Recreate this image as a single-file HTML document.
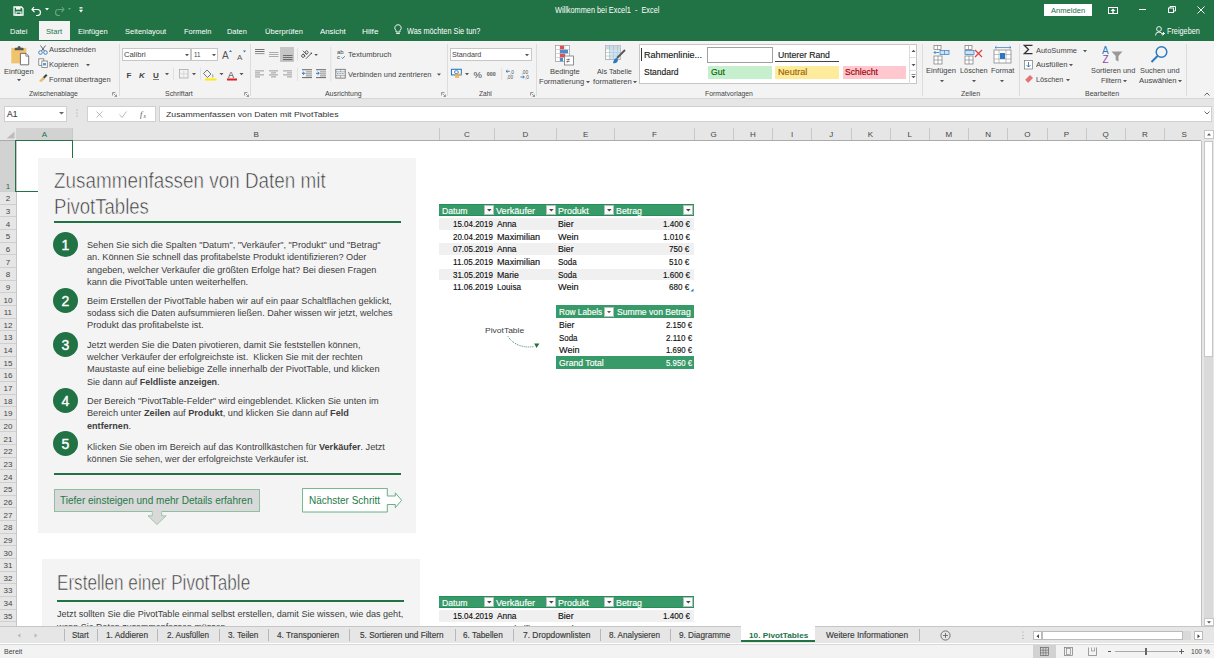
<!DOCTYPE html>
<html><head><meta charset="utf-8"><title>Excel</title>
<style>
html,body{margin:0;padding:0;}
body{width:1214px;height:658px;position:relative;overflow:hidden;background:#fff;font-family:"Liberation Sans", sans-serif;}
.r{position:absolute;}
.t{position:absolute;white-space:nowrap;line-height:1;transform-origin:0 0;}
.t b{font-weight:bold;}
.ch{position:absolute;top:131.28px;font-size:8px;line-height:1;text-align:center;}
.rh{position:absolute;left:0;width:15.8px;font-size:8px;line-height:1;text-align:center;}
.circ{position:absolute;width:25px;height:25px;border-radius:50%;background:#217346;color:#fff;font-size:14px;line-height:26.2px;text-align:center;-webkit-text-stroke:0.4px #fff;}
</style></head><body>
<div class="r" style="left:0.00px;top:0.00px;width:1214.00px;height:40.50px;background:#217346;;"></div>
<div class="r" style="left:38.50px;top:21.30px;width:31.20px;height:19.20px;background:#f3f3f3;;"></div>
<svg class="r" style="left:13.00px;top:6.00px;" width="11" height="10" viewBox="0 0 11 10"><path d="M1 1h7.5l1.5 1.5v6.5h-9z" fill="none" stroke="#fff" stroke-width="1.3"/><rect x="3" y="1" width="4.5" height="2.6" fill="#fff"/><rect x="3" y="6" width="5" height="3" fill="none" stroke="#fff" stroke-width="1"/></svg>
<svg class="r" style="left:31.00px;top:5.00px;" width="12" height="11" viewBox="0 0 12 11"><path d="M3 2L1 4.5 3.5 7" fill="none" stroke="#fff" stroke-width="1.2"/><path d="M1.5 4.5h5a3 3 0 0 1 0 6H5" fill="none" stroke="#fff" stroke-width="1.2"/></svg>
<svg class="r" style="left:45.00px;top:8.00px;" width="4" height="3" viewBox="0 0 4 3"><path d="M0 0h4L2 2.5z" fill="#fff"/></svg>
<svg class="r" style="left:54.00px;top:5.00px;" width="11" height="11" viewBox="0 0 11 11"><path d="M8 2l2 2.5L7.5 7" fill="none" stroke="#6aa383" stroke-width="1.1"/><path d="M9.5 4.5h-5a3 3 0 0 0 0 6H6" fill="none" stroke="#6aa383" stroke-width="1.1"/></svg>
<svg class="r" style="left:67.50px;top:8.00px;" width="3" height="3" viewBox="0 0 3 3"><path d="M0 0h3L1.5 2z" fill="#6aa383"/></svg>
<svg class="r" style="left:78.50px;top:7.00px;" width="4" height="6" viewBox="0 0 4 6"><rect x="0.5" y="0" width="3" height="0.8" fill="#fff"/><rect x="0.5" y="1.5" width="3" height="0.8" fill="#fff"/><path d="M0 3h4L2 5.5z" fill="#fff"/></svg>
<div class="r" style="left:1044.30px;top:3.50px;width:48.10px;height:12.20px;background:#fff;;"></div>
<svg class="r" style="left:1108.00px;top:6.50px;" width="10" height="7" viewBox="0 0 10 7"><rect x="0.5" y="0.5" width="9" height="6" fill="none" stroke="#fff" stroke-width="1"/><path d="M5 1.5L7.5 4h-5z" fill="#fff"/><rect x="4.3" y="3.5" width="1.4" height="2.5" fill="#fff"/></svg>
<div class="r" style="left:1139.00px;top:9.40px;width:7.00px;height:1.00px;background:#fff;;"></div>
<svg class="r" style="left:1167.50px;top:6.30px;" width="8" height="7" viewBox="0 0 8 7"><rect x="0.5" y="2" width="5" height="4.5" fill="none" stroke="#fff" stroke-width="1"/><path d="M2 2V0.5h5.5V5H6" fill="none" stroke="#fff" stroke-width="1"/></svg>
<svg class="r" style="left:1197.00px;top:6.00px;" width="8" height="8" viewBox="0 0 8 8"><path d="M0.5 0.5L7.5 7.5M7.5 0.5L0.5 7.5" stroke="#fff" stroke-width="1"/></svg>
<svg class="r" style="left:394.00px;top:24.00px;" width="8" height="11" viewBox="0 0 8 11"><path d="M4 0.7a3.2 3.2 0 0 0-2 5.7V8h4V6.4A3.2 3.2 0 0 0 4 0.7z" fill="none" stroke="#fff" stroke-width="0.9"/><rect x="2.2" y="9" width="3.6" height="0.9" fill="#fff"/></svg>
<svg class="r" style="left:1155.00px;top:26.00px;" width="10" height="10" viewBox="0 0 10 10"><circle cx="4" cy="3" r="2.4" fill="none" stroke="#fff" stroke-width="0.9"/><path d="M0.5 9.5a3.5 3.5 0 0 1 7 0" fill="none" stroke="#fff" stroke-width="0.9"/><path d="M7 7.5h3M8.5 6v3" stroke="#fff" stroke-width="0.9"/></svg>
<div class="r" style="left:0.00px;top:40.50px;width:1214.00px;height:58.00px;background:#f3f3f3;;"></div>
<div class="r" style="left:0.00px;top:98.00px;width:1214.00px;height:0.80px;background:#d6d6d6;;"></div>
<div class="r" style="left:118.60px;top:43.50px;width:0.80px;height:52.00px;background:#dcdcdc;;"></div>
<div class="r" style="left:249.70px;top:43.50px;width:0.80px;height:52.00px;background:#dcdcdc;;"></div>
<div class="r" style="left:446.80px;top:43.50px;width:0.80px;height:52.00px;background:#dcdcdc;;"></div>
<div class="r" style="left:535.90px;top:43.50px;width:0.80px;height:52.00px;background:#dcdcdc;;"></div>
<div class="r" style="left:922.40px;top:43.50px;width:0.80px;height:52.00px;background:#dcdcdc;;"></div>
<div class="r" style="left:1018.50px;top:43.50px;width:0.80px;height:52.00px;background:#dcdcdc;;"></div>
<div class="r" style="left:1185.80px;top:43.50px;width:0.80px;height:52.00px;background:#dcdcdc;;"></div>
<svg class="r" style="left:112.00px;top:91.50px;" width="5" height="5" viewBox="0 0 5 5"><path d="M0.5 0.5h3M0.5 0.5v3M1.5 1.5l3 3M2.5 4.5h2v-2" fill="none" stroke="#777" stroke-width="0.7"/></svg>
<svg class="r" style="left:243.50px;top:91.50px;" width="5" height="5" viewBox="0 0 5 5"><path d="M0.5 0.5h3M0.5 0.5v3M1.5 1.5l3 3M2.5 4.5h2v-2" fill="none" stroke="#777" stroke-width="0.7"/></svg>
<svg class="r" style="left:440.50px;top:91.50px;" width="5" height="5" viewBox="0 0 5 5"><path d="M0.5 0.5h3M0.5 0.5v3M1.5 1.5l3 3M2.5 4.5h2v-2" fill="none" stroke="#777" stroke-width="0.7"/></svg>
<svg class="r" style="left:529.50px;top:91.50px;" width="5" height="5" viewBox="0 0 5 5"><path d="M0.5 0.5h3M0.5 0.5v3M1.5 1.5l3 3M2.5 4.5h2v-2" fill="none" stroke="#777" stroke-width="0.7"/></svg>
<svg class="r" style="left:10.00px;top:44.50px;" width="21" height="21" viewBox="0 0 21 21"><rect x="1.3" y="2.9" width="15" height="15.5" fill="#f0c36d"/><path d="M4.7 5.3v-1.6q0-1 1-1h1.8a1.6 1.6 0 0 1 3.2 0h1.9q1 0 1 1v1.6z" fill="#555"/><path d="M10.4 8.4h5.6l2.7 2.7v8.7h-8.3z" fill="#fff" stroke="#666" stroke-width="0.9"/><path d="M15.9 8.4v2.8h2.8" fill="none" stroke="#666" stroke-width="0.7"/></svg>
<svg class="r" style="left:16.50px;top:79.00px;" width="4" height="3" viewBox="0 0 4 3"><path d="M0 0h4L2 2.2z" fill="#555"/></svg>
<svg class="r" style="left:37.50px;top:44.50px;" width="10" height="10" viewBox="0 0 10 10"><circle cx="2.5" cy="7.5" r="1.8" fill="none" stroke="#2b79c2" stroke-width="0.9"/><circle cx="7.5" cy="7.5" r="1.8" fill="none" stroke="#2b79c2" stroke-width="0.9"/><path d="M3.5 6L7.5 0.5M6.5 6L2.5 0.5" stroke="#555" stroke-width="0.9"/></svg>
<svg class="r" style="left:37.50px;top:58.00px;" width="10" height="10" viewBox="0 0 10 10"><rect x="0.8" y="0.8" width="5" height="6.5" fill="#fff" stroke="#777" stroke-width="0.8"/><rect x="3.8" y="3" width="5.5" height="6.5" fill="#fff" stroke="#777" stroke-width="0.8"/><rect x="5" y="5" width="3" height="2.5" fill="#5b9bd5"/></svg>
<svg class="r" style="left:85.50px;top:64.00px;" width="4" height="3" viewBox="0 0 4 3"><path d="M0 0h4L2 2.2z" fill="#555"/></svg>
<svg class="r" style="left:37.50px;top:73.00px;" width="10" height="9" viewBox="0 0 10 9"><path d="M1 8l4-4 2 2-4 3z" fill="#e8b968"/><path d="M5 4l3-3 1.5 1.5-3 3z" fill="#444"/></svg>
<div class="r" style="left:121.60px;top:47.50px;width:69.80px;height:13.80px;background:#fff;border:0.8px solid #c6c6c6;box-sizing:border-box;"></div>
<div class="r" style="left:191.40px;top:47.50px;width:27.10px;height:13.80px;background:#fff;border:0.8px solid #c6c6c6;box-sizing:border-box;"></div>
<svg class="r" style="left:184.50px;top:53.50px;" width="4" height="3" viewBox="0 0 4 3"><path d="M0 0h4L2 2.2z" fill="#555"/></svg>
<svg class="r" style="left:212.00px;top:53.50px;" width="4" height="3" viewBox="0 0 4 3"><path d="M0 0h4L2 2.2z" fill="#555"/></svg>
<svg class="r" style="left:222.00px;top:49.00px;" width="10" height="11" viewBox="0 0 10 11"><text x="0" y="10" font-family="Liberation Sans" font-size="10" fill="#555">A</text><path d="M7 3l1.5-2L10 3z" fill="#2b79c2"/></svg>
<svg class="r" style="left:236.50px;top:50.00px;" width="9" height="10" viewBox="0 0 9 10"><text x="0" y="9.5" font-family="Liberation Sans" font-size="8" fill="#555">A</text><path d="M6 0.5h3L7.5 2.5z" fill="#2b79c2"/></svg>
<svg class="r" style="left:125.00px;top:68.00px;" width="120" height="14" viewBox="0 0 120 14"><text x="1.5" y="9.8" font-family="Liberation Sans" font-weight="bold" font-size="8" fill="#444">F</text><text x="14" y="9.8" font-family="Liberation Sans" font-weight="bold" font-style="italic" font-size="8" fill="#444">K</text><text x="28" y="9.5" font-family="Liberation Sans" font-weight="bold" font-size="8" fill="#444">U</text><rect x="28" y="11" width="6" height="0.7" fill="#444"/><path d="M40 5h4l-2 2.2z" fill="#555"/><rect x="48.2" y="0" width="0.8" height="12" fill="#dcdcdc"/><rect x="54.5" y="1.5" width="8.5" height="8.5" fill="none" stroke="#aaa" stroke-width="0.8"/><path d="M58.75 1.5v8.5M54.5 5.75h8.5" stroke="#ccc" stroke-width="0.6"/><path d="M67 5h4l-2 2.2z" fill="#555"/><rect x="75.2" y="0" width="0.8" height="12" fill="#dcdcdc"/><path d="M82 2l4 4-3.5 3.5-4-4z" fill="none" stroke="#555" stroke-width="0.8"/><path d="M87.5 6.5q1 2 0 3" fill="none" stroke="#555" stroke-width="0.6"/><rect x="80" y="10.5" width="11.5" height="2" fill="#ffea00"/><path d="M94.5 5h4l-2 2.2z" fill="#555"/><text x="103" y="9.5" font-family="Liberation Sans" font-size="9" fill="#444">A</text><rect x="102" y="10.5" width="10" height="2" fill="#e02020"/><path d="M114.5 5h4l-2 2.2z" fill="#555"/></svg>
<div class="r" style="left:280.30px;top:47.30px;width:13.80px;height:14.50px;background:#c6c6c6;;"></div>
<svg class="r" style="left:250.00px;top:42.00px;" width="200" height="40" viewBox="0 0 200 40"><rect x="5" y="7" width="9.5" height="0.8" fill="#555"/><rect x="5" y="9" width="9.5" height="0.8" fill="#555"/><rect x="5" y="11.2" width="9.5" height="0.9" fill="#888"/><rect x="19" y="10" width="9.5" height="0.8" fill="#999"/><rect x="19" y="12" width="9.5" height="0.8" fill="#999"/><rect x="19" y="14" width="9.5" height="0.8" fill="#999"/><rect x="33" y="13" width="9.5" height="0.8" fill="#555"/><rect x="33" y="15" width="9.5" height="0.8" fill="#555"/><rect x="33" y="17.2" width="9.5" height="0.9" fill="#555"/><rect x="47.2" y="6" width="0.8" height="13" fill="#dcdcdc"/><rect x="47.2" y="26" width="0.8" height="13" fill="#dcdcdc"/><g transform="rotate(-45 55 12)"><circle cx="52.3" cy="12" r="1.5" fill="none" stroke="#444" stroke-width="0.8"/><path d="M53.8 10.3v3.5" stroke="#444" stroke-width="0.8"/><circle cx="57.3" cy="12" r="1.5" fill="none" stroke="#444" stroke-width="0.8"/><path d="M55.8 8.2v5.6" stroke="#444" stroke-width="0.8"/></g><path d="M56 16.7L61.3 11.3" stroke="#444" stroke-width="0.9"/><circle cx="61.3" cy="11.3" r="0.8" fill="#444"/><path d="M64.3 12h3.6l-1.8 2z" fill="#555"/><rect x="5" y="28.5" width="9" height="0.8" fill="#888"/><rect x="5" y="30.5" width="5" height="0.8" fill="#888"/><rect x="5" y="32.5" width="9" height="0.8" fill="#888"/><rect x="5" y="34.5" width="5" height="0.8" fill="#888"/><rect x="19" y="28.5" width="9" height="0.8" fill="#888"/><rect x="21" y="30.5" width="5" height="0.8" fill="#888"/><rect x="19" y="32.5" width="9" height="0.8" fill="#888"/><rect x="21" y="34.5" width="5" height="0.8" fill="#888"/><rect x="33" y="28.5" width="9" height="0.8" fill="#888"/><rect x="37" y="30.5" width="5" height="0.8" fill="#888"/><rect x="33" y="32.5" width="9" height="0.8" fill="#888"/><rect x="37" y="34.5" width="5" height="0.8" fill="#888"/><rect x="52" y="27.3" width="10" height="0.9" fill="#555"/><rect x="56" y="29.5" width="6" height="0.8" fill="#777"/><rect x="56" y="31.5" width="6" height="0.8" fill="#777"/><rect x="56" y="33.5" width="6" height="0.8" fill="#777"/><rect x="52" y="35.2" width="10" height="0.9" fill="#555"/><path d="M52.3 31.3h3.2M52.3 31.3l1.6-1.5M52.3 31.3l1.6 1.5" stroke="#2b79c2" stroke-width="1" fill="none"/><rect x="66" y="27.3" width="10" height="0.9" fill="#555"/><rect x="70" y="29.5" width="6" height="0.8" fill="#777"/><rect x="70" y="31.5" width="6" height="0.8" fill="#777"/><rect x="70" y="33.5" width="6" height="0.8" fill="#777"/><rect x="66" y="35.2" width="10" height="0.9" fill="#555"/><path d="M66 31.3h3.2M69.2 31.3l-1.6-1.5M69.2 31.3l-1.6 1.5" stroke="#2b79c2" stroke-width="1" fill="none"/><rect x="80.4" y="5" width="0.8" height="34" fill="#dcdcdc"/><text x="87" y="12" font-family="Liberation Sans" font-size="6" fill="#444">ab</text><text x="87" y="17" font-family="Liberation Sans" font-size="6" fill="#444">c</text><path d="M91.5 15.5l1.2 1 2-2.2" stroke="#2b79c2" stroke-width="0.9" fill="none"/><rect x="85.8" y="27.3" width="9.4" height="8.8" fill="none" stroke="#666" stroke-width="0.8"/><path d="M85.8 29.8h9.4M85.8 33.6h9.4M90.5 27.3v2.5M90.5 33.6v2.5" stroke="#888" stroke-width="0.6"/><path d="M87 31.7h7" stroke="#2b79c2" stroke-width="0.8" stroke-dasharray="1 0.6"/><path d="M187 31.5h4l-2 2.2z" fill="#555"/></svg>
<div class="r" style="left:449.50px;top:47.50px;width:82.50px;height:13.80px;background:#fff;border:0.8px solid #c6c6c6;box-sizing:border-box;"></div>
<svg class="r" style="left:525.00px;top:53.50px;" width="4" height="3" viewBox="0 0 4 3"><path d="M0 0h4L2 2.2z" fill="#555"/></svg>
<svg class="r" style="left:450.00px;top:68.00px;" width="85" height="14" viewBox="0 0 85 14"><rect x="1.5" y="1.3" width="9.8" height="5.6" fill="#fff" stroke="#2b79c2" stroke-width="1.1"/><ellipse cx="6.4" cy="4.1" rx="2" ry="1.5" fill="none" stroke="#2b79c2" stroke-width="0.9"/><rect x="5" y="6.2" width="4" height="1.6" fill="#f0b050"/><rect x="5" y="8.2" width="4" height="1.6" fill="#f0b050"/><rect x="7.8" y="5.5" width="3.5" height="1.5" fill="#f0b050"/><path d="M15 5h4l-2 2.2z" fill="#555"/><text x="23.6" y="9.6" font-family="Liberation Sans" font-size="9.5" fill="#444">%</text><text x="36.8" y="7.7" font-family="Liberation Sans" font-weight="bold" font-size="5.3" fill="#555">000</text><rect x="51.3" y="0" width="0.8" height="12" fill="#dcdcdc"/><text x="60" y="5.5" font-family="Liberation Sans" font-size="4.8" fill="#555">,0</text><text x="56.5" y="10.5" font-family="Liberation Sans" font-size="4.8" fill="#555">,00</text><path d="M56 3.3h3.8M56 3.3l1.5-1.3M56 3.3l1.5 1.3" stroke="#2b79c2" stroke-width="0.9" fill="none"/><text x="71.5" y="5.5" font-family="Liberation Sans" font-size="4.8" fill="#555">,00</text><text x="75" y="10.5" font-family="Liberation Sans" font-size="4.8" fill="#555">,0</text><path d="M70.5 9h3.8M74.3 9l-1.5-1.3M74.3 9l-1.5 1.3" stroke="#2b79c2" stroke-width="0.9" fill="none"/></svg>
<svg class="r" style="left:555.00px;top:44.50px;" width="20" height="21" viewBox="0 0 20 21"><rect x="0.5" y="0.5" width="14" height="16" fill="#fff" stroke="#999" stroke-width="0.7"/><path d="M0.5 4.5h14M0.5 8.5h14M0.5 12.5h14M5 0.5v16M10 0.5v16" stroke="#bbb" stroke-width="0.6"/><rect x="5" y="0.8" width="4" height="3.5" fill="#e05050"/><rect x="5" y="4.8" width="8" height="3.5" fill="#4a8bd0"/><rect x="5" y="8.8" width="5" height="3.5" fill="#e05050"/><rect x="5" y="12.8" width="3" height="3.5" fill="#4a8bd0"/><rect x="9.5" y="11" width="9" height="9" fill="#fff" stroke="#777" stroke-width="0.8"/><text x="11.3" y="18" font-family="Liberation Sans" font-size="7" fill="#333">≠</text></svg>
<svg class="r" style="left:586.00px;top:80.50px;" width="4" height="3" viewBox="0 0 4 3"><path d="M0 0h4L2 2.2z" fill="#555"/></svg>
<svg class="r" style="left:605.00px;top:44.50px;" width="21" height="21" viewBox="0 0 21 21"><rect x="0.5" y="0.5" width="15" height="14" fill="#fff" stroke="#999" stroke-width="0.7"/><rect x="0.5" y="0.5" width="15" height="3" fill="#cfd8e8"/><path d="M0.5 4h15M0.5 7.5h15M0.5 11h15M4.5 0.5v14M8.5 0.5v14M12.5 0.5v14" stroke="#9bb" stroke-width="0.6"/><rect x="4.7" y="4.2" width="11" height="10" fill="#b8d0ea" opacity="0.6"/><path d="M20 5l-8 8" stroke="#555" stroke-width="1.8"/><path d="M12 13q-3 0-4 5q4 1 5-3z" fill="#2b79c2"/></svg>
<svg class="r" style="left:632.50px;top:80.50px;" width="4" height="3" viewBox="0 0 4 3"><path d="M0 0h4L2 2.2z" fill="#555"/></svg>
<div class="r" style="left:638.60px;top:44.20px;width:278.40px;height:39.50px;background:#fff;border:0.8px solid #c6c6c6;box-sizing:border-box;"></div>
<div class="r" style="left:908.70px;top:44.20px;width:0.80px;height:39.50px;background:#dcdcdc;;"></div>
<div class="r" style="left:908.70px;top:57.30px;width:8.30px;height:0.80px;background:#dcdcdc;;"></div>
<div class="r" style="left:908.70px;top:70.00px;width:8.30px;height:0.80px;background:#dcdcdc;;"></div>
<svg class="r" style="left:910.50px;top:48.50px;" width="5" height="22" viewBox="0 0 5 22"><path d="M0.5 3h4L2.5 0.8z" fill="#555"/><path d="M0.5 15h4L2.5 17.2z" fill="#555"/></svg>
<svg class="r" style="left:910.50px;top:73.50px;" width="5" height="6" viewBox="0 0 5 6"><rect x="0.5" y="0" width="4" height="0.7" fill="#555"/><path d="M0.5 2h4L2.5 4.2z" fill="#555"/></svg>
<div class="r" style="left:641.30px;top:47.90px;width:0.90px;height:13.60px;background:#333;;"></div>
<div class="r" style="left:707.00px;top:47.10px;width:65.80px;height:16.10px;background:#fff;border:1.6px solid #a0a0a0;box-sizing:border-box;"></div>
<div class="r" style="left:775.30px;top:61.10px;width:63.50px;height:0.90px;background:#444;;"></div>
<div class="r" style="left:708.30px;top:65.90px;width:63.30px;height:13.60px;background:#c6efce;;"></div>
<div class="r" style="left:775.30px;top:65.90px;width:63.50px;height:13.60px;background:#ffeb9c;;"></div>
<div class="r" style="left:842.50px;top:65.90px;width:63.50px;height:13.60px;background:#ffc7ce;;"></div>
<svg class="r" style="left:932.00px;top:44.50px;" width="20" height="20" viewBox="0 0 20 20"><rect x="2" y="0.5" width="7" height="4" fill="#fff" stroke="#777" stroke-width="0.7"/><path d="M5.5 0.5v4" stroke="#777" stroke-width="0.6"/><rect x="8" y="5.5" width="9" height="4" fill="#cfe0f3" stroke="#2b79c2" stroke-width="0.7"/><path d="M12.5 5.5v4" stroke="#2b79c2" stroke-width="0.6"/><path d="M2 7.5h5M2 7.5l1.5-1.5M2 7.5l1.5 1.5" stroke="#2b79c2" stroke-width="0.8" fill="none"/><rect x="2" y="11" width="8" height="8" fill="#fff" stroke="#777" stroke-width="0.7"/><path d="M6 11v8M2 15h8" stroke="#777" stroke-width="0.6"/></svg>
<svg class="r" style="left:939.50px;top:79.50px;" width="4" height="3" viewBox="0 0 4 3"><path d="M0 0h4L2 2.2z" fill="#555"/></svg>
<svg class="r" style="left:964.00px;top:44.50px;" width="20" height="20" viewBox="0 0 20 20"><rect x="1" y="0.5" width="7" height="4" fill="#fff" stroke="#777" stroke-width="0.7"/><path d="M4.5 0.5v4" stroke="#777" stroke-width="0.6"/><rect x="1" y="5.5" width="9" height="4" fill="#cfe0f3" stroke="#2b79c2" stroke-width="0.7"/><rect x="1" y="11" width="8" height="8" fill="#fff" stroke="#777" stroke-width="0.7"/><path d="M5 11v8M1 15h8" stroke="#777" stroke-width="0.6"/><path d="M11 5l7 7M18 5l-7 7" stroke="#e04040" stroke-width="1.2"/></svg>
<svg class="r" style="left:971.50px;top:79.50px;" width="4" height="3" viewBox="0 0 4 3"><path d="M0 0h4L2 2.2z" fill="#555"/></svg>
<svg class="r" style="left:993.00px;top:44.50px;" width="20" height="20" viewBox="0 0 20 20"><path d="M2 2.5h16M2 2.5l1.5-1.3M2 2.5l1.5 1.3M18 2.5l-1.5-1.3M18 2.5l-1.5 1.3" stroke="#2b79c2" stroke-width="0.7" fill="none"/><rect x="1" y="5" width="17" height="13" fill="#fff" stroke="#777" stroke-width="0.7"/><path d="M6 5v13M13 5v13M1 9.5h17M1 14h17" stroke="#999" stroke-width="0.6"/><rect x="7" y="8" width="5" height="6" fill="#2b79c2"/></svg>
<svg class="r" style="left:1000.00px;top:79.50px;" width="4" height="3" viewBox="0 0 4 3"><path d="M0 0h4L2 2.2z" fill="#555"/></svg>
<svg class="r" style="left:1023.00px;top:44.00px;" width="11" height="11" viewBox="0 0 11 11"><path d="M9.5 1.3H1.3L5.5 5.5 1.3 9.7h8.2" fill="none" stroke="#333" stroke-width="1.3"/></svg>
<svg class="r" style="left:1082.50px;top:49.50px;" width="4" height="3" viewBox="0 0 4 3"><path d="M0 0h4L2 2.2z" fill="#555"/></svg>
<svg class="r" style="left:1024.00px;top:59.50px;" width="9" height="10" viewBox="0 0 9 10"><rect x="0.5" y="0.5" width="8" height="8.5" fill="#fff" stroke="#777" stroke-width="0.7"/><path d="M4.5 2v5M2.5 5l2 2 2-2" stroke="#2b79c2" stroke-width="0.9" fill="none"/></svg>
<svg class="r" style="left:1069.00px;top:64.00px;" width="4" height="3" viewBox="0 0 4 3"><path d="M0 0h4L2 2.2z" fill="#555"/></svg>
<svg class="r" style="left:1024.00px;top:74.00px;" width="10" height="9" viewBox="0 0 10 9"><path d="M1 6l5-5 3 3-5 5z" fill="#e57373"/><path d="M1 6l3 3" stroke="#fff" stroke-width="0.5"/></svg>
<svg class="r" style="left:1065.50px;top:78.50px;" width="4" height="3" viewBox="0 0 4 3"><path d="M0 0h4L2 2.2z" fill="#555"/></svg>
<svg class="r" style="left:1102.00px;top:45.00px;" width="22" height="19" viewBox="0 0 22 19"><text x="0" y="8.5" font-family="Liberation Sans" font-size="10" fill="#2b79c2">A</text><text x="0.5" y="18" font-family="Liberation Sans" font-size="10" fill="#8e44ad">Z</text><path d="M9.5 6.5h11l-4 4.5v5.5l-2.8-1.6v-3.9z" fill="#999"/></svg>
<svg class="r" style="left:1122.50px;top:79.50px;" width="4" height="3" viewBox="0 0 4 3"><path d="M0 0h4L2 2.2z" fill="#555"/></svg>
<svg class="r" style="left:1150.00px;top:44.50px;" width="19" height="19" viewBox="0 0 19 19"><circle cx="11.5" cy="7" r="5.3" fill="none" stroke="#2b79c2" stroke-width="1.5"/><path d="M7.5 11l-6 6" stroke="#2b79c2" stroke-width="2"/></svg>
<svg class="r" style="left:1178.00px;top:79.50px;" width="4" height="3" viewBox="0 0 4 3"><path d="M0 0h4L2 2.2z" fill="#555"/></svg>
<svg class="r" style="left:1203.50px;top:91.50px;" width="6" height="4" viewBox="0 0 6 4"><path d="M0.5 3.5L3 1l2.5 2.5" fill="none" stroke="#555" stroke-width="0.9"/></svg>
<div class="r" style="left:0.00px;top:98.80px;width:1214.00px;height:29.60px;background:#e6e6e6;;"></div>
<div class="r" style="left:4.00px;top:105.80px;width:63.00px;height:16.00px;background:#fff;border:0.8px solid #d0d0d0;box-sizing:border-box;"></div>
<svg class="r" style="left:59.00px;top:111.50px;" width="5" height="3" viewBox="0 0 5 3"><path d="M0 0h5L2.5 2.5z" fill="#666"/></svg>
<svg class="r" style="left:76.30px;top:109.00px;" width="2" height="8" viewBox="0 0 2 8"><circle cx="1" cy="1" r="0.6" fill="#999"/><circle cx="1" cy="4" r="0.6" fill="#999"/><circle cx="1" cy="7" r="0.6" fill="#999"/></svg>
<div class="r" style="left:86.70px;top:105.80px;width:69.50px;height:16.00px;background:#fff;border:0.8px solid #d0d0d0;box-sizing:border-box;"></div>
<svg class="r" style="left:95.50px;top:110.50px;" width="7" height="7" viewBox="0 0 7 7"><path d="M0.5 0.5l6 6M6.5 0.5l-6 6" stroke="#aaa" stroke-width="0.8"/></svg>
<svg class="r" style="left:118.50px;top:110.50px;" width="8" height="7" viewBox="0 0 8 7"><path d="M0.5 3.5l2.5 3 4.5-6" fill="none" stroke="#aaa" stroke-width="0.8"/></svg>
<svg class="r" style="left:140.00px;top:109.00px;" width="10" height="10" viewBox="0 0 10 10"><text x="0" y="8" font-family="Liberation Serif" font-style="italic" font-size="8.5" fill="#555">f</text><text x="3.5" y="8.5" font-family="Liberation Serif" font-style="italic" font-size="5.5" fill="#555">x</text></svg>
<div class="r" style="left:158.50px;top:105.80px;width:1053.00px;height:16.00px;background:#fff;border:0.8px solid #d0d0d0;box-sizing:border-box;"></div>
<svg class="r" style="left:1203.50px;top:111.00px;" width="6" height="4" viewBox="0 0 6 4"><path d="M0.5 0.5L3 3l2.5-2.5" fill="none" stroke="#555" stroke-width="0.9"/></svg>
<div class="r" style="left:0.00px;top:128.40px;width:1202.00px;height:11.80px;background:#e6e6e6;;"></div>
<div class="r" style="left:16.20px;top:128.40px;width:56.50px;height:11.80px;background:#d2d2d2;;"></div>
<div class="r" style="left:0.00px;top:139.80px;width:1202.00px;height:0.80px;background:#ababab;;"></div>
<svg class="r" style="left:6.00px;top:131.00px;" width="9" height="8" viewBox="0 0 9 8"><path d="M8.5 0.5V7.5H0.5z" fill="#bdbdbd"/></svg>
<div class="r" style="left:72.30px;top:128.40px;width:0.80px;height:11.60px;background:#c8c8c8;;"></div>
<div class="ch" style="left:16.20px;width:56.50px;color:#217346">A</div>
<div class="r" style="left:439.10px;top:128.40px;width:0.80px;height:11.60px;background:#c8c8c8;;"></div>
<div class="ch" style="left:72.70px;width:366.80px;color:#444">B</div>
<div class="r" style="left:494.00px;top:128.40px;width:0.80px;height:11.60px;background:#c8c8c8;;"></div>
<div class="ch" style="left:439.50px;width:54.90px;color:#444">C</div>
<div class="r" style="left:556.20px;top:128.40px;width:0.80px;height:11.60px;background:#c8c8c8;;"></div>
<div class="ch" style="left:494.40px;width:62.20px;color:#444">D</div>
<div class="r" style="left:614.40px;top:128.40px;width:0.80px;height:11.60px;background:#c8c8c8;;"></div>
<div class="ch" style="left:556.60px;width:58.20px;color:#444">E</div>
<div class="r" style="left:693.70px;top:128.40px;width:0.80px;height:11.60px;background:#c8c8c8;;"></div>
<div class="ch" style="left:614.80px;width:79.30px;color:#444">F</div>
<div class="r" style="left:732.90px;top:128.40px;width:0.80px;height:11.60px;background:#c8c8c8;;"></div>
<div class="ch" style="left:694.10px;width:39.20px;color:#444">G</div>
<div class="r" style="left:772.10px;top:128.40px;width:0.80px;height:11.60px;background:#c8c8c8;;"></div>
<div class="ch" style="left:733.30px;width:39.20px;color:#444">H</div>
<div class="r" style="left:811.30px;top:128.40px;width:0.80px;height:11.60px;background:#c8c8c8;;"></div>
<div class="ch" style="left:772.50px;width:39.20px;color:#444">I</div>
<div class="r" style="left:850.50px;top:128.40px;width:0.80px;height:11.60px;background:#c8c8c8;;"></div>
<div class="ch" style="left:811.70px;width:39.20px;color:#444">J</div>
<div class="r" style="left:889.70px;top:128.40px;width:0.80px;height:11.60px;background:#c8c8c8;;"></div>
<div class="ch" style="left:850.90px;width:39.20px;color:#444">K</div>
<div class="r" style="left:928.90px;top:128.40px;width:0.80px;height:11.60px;background:#c8c8c8;;"></div>
<div class="ch" style="left:890.10px;width:39.20px;color:#444">L</div>
<div class="r" style="left:968.10px;top:128.40px;width:0.80px;height:11.60px;background:#c8c8c8;;"></div>
<div class="ch" style="left:929.30px;width:39.20px;color:#444">M</div>
<div class="r" style="left:1007.30px;top:128.40px;width:0.80px;height:11.60px;background:#c8c8c8;;"></div>
<div class="ch" style="left:968.50px;width:39.20px;color:#444">N</div>
<div class="r" style="left:1046.50px;top:128.40px;width:0.80px;height:11.60px;background:#c8c8c8;;"></div>
<div class="ch" style="left:1007.70px;width:39.20px;color:#444">O</div>
<div class="r" style="left:1085.70px;top:128.40px;width:0.80px;height:11.60px;background:#c8c8c8;;"></div>
<div class="ch" style="left:1046.90px;width:39.20px;color:#444">P</div>
<div class="r" style="left:1124.90px;top:128.40px;width:0.80px;height:11.60px;background:#c8c8c8;;"></div>
<div class="ch" style="left:1086.10px;width:39.20px;color:#444">Q</div>
<div class="r" style="left:1164.10px;top:128.40px;width:0.80px;height:11.60px;background:#c8c8c8;;"></div>
<div class="ch" style="left:1125.30px;width:39.20px;color:#444">R</div>
<div class="r" style="left:1203.30px;top:128.40px;width:0.80px;height:11.60px;background:#c8c8c8;;"></div>
<div class="ch" style="left:1164.50px;width:39.20px;color:#444">S</div>
<div class="r" style="left:16.40px;top:140.60px;width:1185.00px;height:485.50px;background:#fff;;"></div>
<div class="r" style="left:0.00px;top:140.60px;width:16.40px;height:485.50px;background:#e6e6e6;;"></div>
<div class="r" style="left:0.00px;top:140.60px;width:16.40px;height:51.00px;background:#d2d2d2;;"></div>
<div class="r" style="left:16.00px;top:140.60px;width:0.80px;height:485.50px;background:#c6c6c6;;"></div>
<div class="r" style="left:0.00px;top:191.10px;width:16.40px;height:0.80px;background:#cfcfcf;;"></div>
<div class="rh" style="top:182.68px;color:#217346">1</div>
<div class="r" style="left:0.00px;top:203.75px;width:16.40px;height:0.80px;background:#cfcfcf;;"></div>
<div class="rh" style="top:195.33px;color:#444">2</div>
<div class="r" style="left:0.00px;top:216.40px;width:16.40px;height:0.80px;background:#cfcfcf;;"></div>
<div class="rh" style="top:207.98px;color:#444">3</div>
<div class="r" style="left:0.00px;top:229.05px;width:16.40px;height:0.80px;background:#cfcfcf;;"></div>
<div class="rh" style="top:220.63px;color:#444">4</div>
<div class="r" style="left:0.00px;top:241.70px;width:16.40px;height:0.80px;background:#cfcfcf;;"></div>
<div class="rh" style="top:233.28px;color:#444">5</div>
<div class="r" style="left:0.00px;top:254.35px;width:16.40px;height:0.80px;background:#cfcfcf;;"></div>
<div class="rh" style="top:245.93px;color:#444">6</div>
<div class="r" style="left:0.00px;top:267.00px;width:16.40px;height:0.80px;background:#cfcfcf;;"></div>
<div class="rh" style="top:258.58px;color:#444">7</div>
<div class="r" style="left:0.00px;top:279.65px;width:16.40px;height:0.80px;background:#cfcfcf;;"></div>
<div class="rh" style="top:271.23px;color:#444">8</div>
<div class="r" style="left:0.00px;top:292.30px;width:16.40px;height:0.80px;background:#cfcfcf;;"></div>
<div class="rh" style="top:283.88px;color:#444">9</div>
<div class="r" style="left:0.00px;top:304.95px;width:16.40px;height:0.80px;background:#cfcfcf;;"></div>
<div class="rh" style="top:296.53px;color:#444">10</div>
<div class="r" style="left:0.00px;top:317.60px;width:16.40px;height:0.80px;background:#cfcfcf;;"></div>
<div class="rh" style="top:309.18px;color:#444">11</div>
<div class="r" style="left:0.00px;top:330.25px;width:16.40px;height:0.80px;background:#cfcfcf;;"></div>
<div class="rh" style="top:321.83px;color:#444">12</div>
<div class="r" style="left:0.00px;top:342.90px;width:16.40px;height:0.80px;background:#cfcfcf;;"></div>
<div class="rh" style="top:334.48px;color:#444">13</div>
<div class="r" style="left:0.00px;top:355.55px;width:16.40px;height:0.80px;background:#cfcfcf;;"></div>
<div class="rh" style="top:347.13px;color:#444">14</div>
<div class="r" style="left:0.00px;top:368.20px;width:16.40px;height:0.80px;background:#cfcfcf;;"></div>
<div class="rh" style="top:359.78px;color:#444">15</div>
<div class="r" style="left:0.00px;top:380.85px;width:16.40px;height:0.80px;background:#cfcfcf;;"></div>
<div class="rh" style="top:372.43px;color:#444">16</div>
<div class="r" style="left:0.00px;top:393.50px;width:16.40px;height:0.80px;background:#cfcfcf;;"></div>
<div class="rh" style="top:385.08px;color:#444">17</div>
<div class="r" style="left:0.00px;top:406.15px;width:16.40px;height:0.80px;background:#cfcfcf;;"></div>
<div class="rh" style="top:397.73px;color:#444">18</div>
<div class="r" style="left:0.00px;top:418.80px;width:16.40px;height:0.80px;background:#cfcfcf;;"></div>
<div class="rh" style="top:410.38px;color:#444">19</div>
<div class="r" style="left:0.00px;top:431.45px;width:16.40px;height:0.80px;background:#cfcfcf;;"></div>
<div class="rh" style="top:423.03px;color:#444">20</div>
<div class="r" style="left:0.00px;top:444.10px;width:16.40px;height:0.80px;background:#cfcfcf;;"></div>
<div class="rh" style="top:435.68px;color:#444">21</div>
<div class="r" style="left:0.00px;top:456.75px;width:16.40px;height:0.80px;background:#cfcfcf;;"></div>
<div class="rh" style="top:448.33px;color:#444">22</div>
<div class="r" style="left:0.00px;top:469.40px;width:16.40px;height:0.80px;background:#cfcfcf;;"></div>
<div class="rh" style="top:460.98px;color:#444">23</div>
<div class="r" style="left:0.00px;top:482.05px;width:16.40px;height:0.80px;background:#cfcfcf;;"></div>
<div class="rh" style="top:473.63px;color:#444">24</div>
<div class="r" style="left:0.00px;top:494.70px;width:16.40px;height:0.80px;background:#cfcfcf;;"></div>
<div class="rh" style="top:486.28px;color:#444">25</div>
<div class="r" style="left:0.00px;top:507.35px;width:16.40px;height:0.80px;background:#cfcfcf;;"></div>
<div class="rh" style="top:498.93px;color:#444">26</div>
<div class="r" style="left:0.00px;top:520.00px;width:16.40px;height:0.80px;background:#cfcfcf;;"></div>
<div class="rh" style="top:511.58px;color:#444">27</div>
<div class="r" style="left:0.00px;top:532.65px;width:16.40px;height:0.80px;background:#cfcfcf;;"></div>
<div class="rh" style="top:524.23px;color:#444">28</div>
<div class="r" style="left:0.00px;top:545.30px;width:16.40px;height:0.80px;background:#cfcfcf;;"></div>
<div class="rh" style="top:536.88px;color:#444">29</div>
<div class="r" style="left:0.00px;top:557.95px;width:16.40px;height:0.80px;background:#cfcfcf;;"></div>
<div class="rh" style="top:549.53px;color:#444">30</div>
<div class="r" style="left:0.00px;top:570.60px;width:16.40px;height:0.80px;background:#cfcfcf;;"></div>
<div class="rh" style="top:562.18px;color:#444">31</div>
<div class="r" style="left:0.00px;top:583.25px;width:16.40px;height:0.80px;background:#cfcfcf;;"></div>
<div class="rh" style="top:574.83px;color:#444">32</div>
<div class="r" style="left:0.00px;top:595.90px;width:16.40px;height:0.80px;background:#cfcfcf;;"></div>
<div class="rh" style="top:587.48px;color:#444">33</div>
<div class="r" style="left:0.00px;top:608.55px;width:16.40px;height:0.80px;background:#cfcfcf;;"></div>
<div class="rh" style="top:600.13px;color:#444">34</div>
<div class="r" style="left:0.00px;top:621.20px;width:16.40px;height:0.80px;background:#cfcfcf;;"></div>
<div class="rh" style="top:612.78px;color:#444">35</div>
<div class="r" style="left:0.00px;top:633.85px;width:16.40px;height:0.80px;background:#cfcfcf;;"></div>
<div class="rh" style="top:625.43px;color:#444">36</div>
<div class="r" style="left:14.80px;top:139.70px;width:58.70px;height:52.40px;background:none;border:1.6px solid #217346;box-sizing:border-box;"></div>
<div class="r" style="left:1201.00px;top:128.40px;width:13.00px;height:497.70px;background:#e6e6e6;;"></div>
<div class="r" style="left:1201.00px;top:140.60px;width:0.80px;height:485.50px;background:#c0c0c0;;"></div>
<div class="r" style="left:1203.60px;top:130.00px;width:10.00px;height:9.20px;background:#fff;border:0.7px solid #c6c6c6;box-sizing:border-box;"></div>
<svg class="r" style="left:1206.50px;top:133.00px;" width="4" height="3" viewBox="0 0 4 3"><path d="M0 2.5h4L2 0.3z" fill="#555"/></svg>
<div class="r" style="left:1204.20px;top:140.60px;width:8.80px;height:216.80px;background:#fff;border:0.7px solid #c6c6c6;box-sizing:border-box;"></div>
<div class="r" style="left:1204.20px;top:357.40px;width:8.80px;height:261.00px;background:#dadada;;"></div>
<div class="r" style="left:1204.20px;top:618.40px;width:9.80px;height:8.00px;background:#fff;border:0.7px solid #c6c6c6;box-sizing:border-box;"></div>
<svg class="r" style="left:1207.00px;top:621.00px;" width="4" height="3" viewBox="0 0 4 3"><path d="M0 0.3h4L2 2.5z" fill="#555"/></svg>
<div class="r" style="left:37.90px;top:157.90px;width:378.50px;height:375.10px;background:#f4f4f4;;"></div>
<div class="r" style="left:53.90px;top:221.20px;width:346.70px;height:1.70px;background:#217346;;"></div>
<div class="circ" style="left:53.00px;top:231.90px">1</div>
<div class="circ" style="left:53.00px;top:288.00px">2</div>
<div class="circ" style="left:53.00px;top:331.90px">3</div>
<div class="circ" style="left:53.00px;top:387.80px">4</div>
<div class="circ" style="left:53.00px;top:430.70px">5</div>
<div class="r" style="left:54.10px;top:473.20px;width:346.50px;height:1.70px;background:#217346;;"></div>
<div class="r" style="left:54.10px;top:488.80px;width:205.60px;height:22.80px;background:#d9d9d9;border:0.8px solid #8cc0a0;box-sizing:border-box;"></div>
<svg class="r" style="left:147.00px;top:510.50px;" width="21" height="15" viewBox="0 0 21 15"><path d="M5.3 0V4.8H1L9.9 13.5L19.2 4.8H14.7V0" fill="#d9d9d9" stroke="#8cc0a0" stroke-width="0.8"/><rect x="5.7" y="0" width="8.6" height="1.5" fill="#d9d9d9"/></svg>
<svg class="r" style="left:302.00px;top:488.00px;" width="102" height="25" viewBox="0 0 102 25"><path d="M0.4 0.4H85.3V8H93.3V4.8L99.6 12.3L93.3 19.7V16.5H85.3V24H0.4Z" fill="#fff" stroke="#5aa67a" stroke-width="0.9"/></svg>
<div class="r" style="left:41.80px;top:558.60px;width:378.20px;height:70.00px;background:#f4f4f4;;"></div>
<div class="r" style="left:57.00px;top:600.00px;width:347.20px;height:1.70px;background:#217346;;"></div>
<div class="r" style="left:439.10px;top:204.05px;width:255.30px;height:12.00px;background:#389a68;border-top:0.8px solid #219058;border-bottom:0.8px solid #219058;box-sizing:border-box;"></div>
<div class="r" style="left:484.00px;top:205.25px;width:9.90px;height:9.80px;background:#fbfbfb;border:0.6px solid #bbb;box-sizing:border-box;"></div>
<svg class="r" style="left:486.60px;top:209.15px;" width="5" height="3" viewBox="0 0 5 3"><path d="M0 0h4.6L2.3 2.4z" fill="#444"/></svg>
<div class="r" style="left:546.20px;top:205.25px;width:9.90px;height:9.80px;background:#fbfbfb;border:0.6px solid #bbb;box-sizing:border-box;"></div>
<svg class="r" style="left:548.80px;top:209.15px;" width="5" height="3" viewBox="0 0 5 3"><path d="M0 0h4.6L2.3 2.4z" fill="#444"/></svg>
<div class="r" style="left:604.30px;top:205.25px;width:9.90px;height:9.80px;background:#fbfbfb;border:0.6px solid #bbb;box-sizing:border-box;"></div>
<svg class="r" style="left:606.90px;top:209.15px;" width="5" height="3" viewBox="0 0 5 3"><path d="M0 0h4.6L2.3 2.4z" fill="#444"/></svg>
<div class="r" style="left:683.20px;top:205.25px;width:9.90px;height:9.80px;background:#fbfbfb;border:0.6px solid #bbb;box-sizing:border-box;"></div>
<svg class="r" style="left:685.80px;top:209.15px;" width="5" height="3" viewBox="0 0 5 3"><path d="M0 0h4.6L2.3 2.4z" fill="#444"/></svg>
<div class="r" style="left:439.10px;top:218.00px;width:255.30px;height:11.50px;background:#f0f0f0;;"></div>
<div class="r" style="left:439.10px;top:243.30px;width:255.30px;height:11.50px;background:#f0f0f0;;"></div>
<div class="r" style="left:439.10px;top:268.60px;width:255.30px;height:11.50px;background:#f0f0f0;;"></div>
<svg class="r" style="left:690.00px;top:288.00px;" width="4" height="4" viewBox="0 0 4 4"><path d="M3.5 0.5v3h-3z" fill="#2b79c2"/></svg>
<div class="r" style="left:556.20px;top:305.35px;width:137.90px;height:12.70px;background:#389a68;;"></div>
<div class="r" style="left:604.00px;top:306.85px;width:10.20px;height:9.90px;background:#fff;border:0.6px solid #bbb;box-sizing:border-box;"></div>
<svg class="r" style="left:607.00px;top:310.75px;" width="4" height="3" viewBox="0 0 4 3"><path d="M0 0h4L2 2.2z" fill="#555"/></svg>
<div class="r" style="left:556.20px;top:355.95px;width:137.90px;height:12.70px;background:#389a68;;"></div>
<svg class="r" style="left:505.00px;top:333.00px;" width="37" height="17" viewBox="0 0 37 17"><path d="M3 3.4C7 10 16 15.5 28.8 13.6" fill="none" stroke="#217346" stroke-width="0.9" stroke-dasharray="0.9 1.1"/><path d="M29.2 10.6h5.2L31.5 15z" fill="#217346"/></svg>
<div class="r" style="left:439.10px;top:596.20px;width:255.30px;height:12.00px;background:#389a68;border-top:0.8px solid #219058;border-bottom:0.8px solid #219058;box-sizing:border-box;"></div>
<div class="r" style="left:484.00px;top:597.40px;width:9.90px;height:9.80px;background:#fbfbfb;border:0.6px solid #bbb;box-sizing:border-box;"></div>
<svg class="r" style="left:486.60px;top:601.30px;" width="5" height="3" viewBox="0 0 5 3"><path d="M0 0h4.6L2.3 2.4z" fill="#444"/></svg>
<div class="r" style="left:546.20px;top:597.40px;width:9.90px;height:9.80px;background:#fbfbfb;border:0.6px solid #bbb;box-sizing:border-box;"></div>
<svg class="r" style="left:548.80px;top:601.30px;" width="5" height="3" viewBox="0 0 5 3"><path d="M0 0h4.6L2.3 2.4z" fill="#444"/></svg>
<div class="r" style="left:604.30px;top:597.40px;width:9.90px;height:9.80px;background:#fbfbfb;border:0.6px solid #bbb;box-sizing:border-box;"></div>
<svg class="r" style="left:606.90px;top:601.30px;" width="5" height="3" viewBox="0 0 5 3"><path d="M0 0h4.6L2.3 2.4z" fill="#444"/></svg>
<div class="r" style="left:683.20px;top:597.40px;width:9.90px;height:9.80px;background:#fbfbfb;border:0.6px solid #bbb;box-sizing:border-box;"></div>
<svg class="r" style="left:685.80px;top:601.30px;" width="5" height="3" viewBox="0 0 5 3"><path d="M0 0h4.6L2.3 2.4z" fill="#444"/></svg>
<div class="r" style="left:439.10px;top:610.15px;width:255.30px;height:11.50px;background:#f0f0f0;;"></div>
<div class="r" style="left:0.00px;top:626.10px;width:1214.00px;height:17.30px;background:#e6e6e6;;z-index:5;"></div>
<div class="r" style="left:0.00px;top:626.10px;width:1214.00px;height:0.80px;background:#c6c6c6;;z-index:5;"></div>
<svg class="r" style="left:16.50px;top:633.00px;z-index:5;" width="4" height="5" viewBox="0 0 4 5"><path d="M3.5 0.3v4.4L0.5 2.5z" fill="#bbb"/></svg>
<svg class="r" style="left:34.00px;top:633.00px;z-index:5;" width="4" height="5" viewBox="0 0 4 5"><path d="M0.5 0.3v4.4L3.5 2.5z" fill="#bbb"/></svg>
<div class="r" style="left:63.70px;top:629.00px;width:0.80px;height:12.00px;background:#b8b8b8;;z-index:5;"></div>
<div class="r" style="left:97.10px;top:629.00px;width:0.80px;height:12.00px;background:#b8b8b8;;z-index:5;"></div>
<div class="r" style="left:157.40px;top:629.00px;width:0.80px;height:12.00px;background:#b8b8b8;;z-index:5;"></div>
<div class="r" style="left:219.40px;top:629.00px;width:0.80px;height:12.00px;background:#b8b8b8;;z-index:5;"></div>
<div class="r" style="left:268.10px;top:629.00px;width:0.80px;height:12.00px;background:#b8b8b8;;z-index:5;"></div>
<div class="r" style="left:349.20px;top:629.00px;width:0.80px;height:12.00px;background:#b8b8b8;;z-index:5;"></div>
<div class="r" style="left:454.70px;top:629.00px;width:0.80px;height:12.00px;background:#b8b8b8;;z-index:5;"></div>
<div class="r" style="left:513.00px;top:629.00px;width:0.80px;height:12.00px;background:#b8b8b8;;z-index:5;"></div>
<div class="r" style="left:600.20px;top:629.00px;width:0.80px;height:12.00px;background:#b8b8b8;;z-index:5;"></div>
<div class="r" style="left:670.40px;top:629.00px;width:0.80px;height:12.00px;background:#b8b8b8;;z-index:5;"></div>
<div class="r" style="left:919.10px;top:629.00px;width:0.80px;height:12.00px;background:#b8b8b8;;z-index:5;"></div>
<div class="r" style="left:740.60px;top:626.10px;width:74.80px;height:15.60px;background:#fff;;z-index:5;"></div>
<div class="r" style="left:740.60px;top:640.30px;width:74.80px;height:1.40px;background:#217346;;z-index:5;"></div>
<svg class="r" style="left:940.00px;top:630.00px;z-index:5;" width="11" height="11" viewBox="0 0 11 11"><circle cx="5.5" cy="5.5" r="4.6" fill="none" stroke="#666" stroke-width="0.9"/><path d="M5.5 3v5M3 5.5h5" stroke="#666" stroke-width="0.9"/></svg>
<svg class="r" style="left:1022.00px;top:631.00px;z-index:5;" width="2" height="9" viewBox="0 0 2 9"><circle cx="1" cy="1" r="0.55" fill="#999"/><circle cx="1" cy="4.2" r="0.55" fill="#999"/><circle cx="1" cy="7.4" r="0.55" fill="#999"/></svg>
<div class="r" style="left:1033.20px;top:630.90px;width:9.00px;height:9.40px;background:#fff;border:0.7px solid #bbb;box-sizing:border-box;z-index:5;"></div>
<svg class="r" style="left:1036.00px;top:633.50px;z-index:5;" width="4" height="5" viewBox="0 0 4 5"><path d="M3 0.3v4L0.5 2.3z" fill="#444"/></svg>
<div class="r" style="left:1042.20px;top:630.90px;width:141.20px;height:9.40px;background:#fff;border:0.7px solid #bbb;box-sizing:border-box;z-index:5;"></div>
<div class="r" style="left:1183.40px;top:630.90px;width:8.00px;height:9.40px;background:#dadada;;z-index:5;"></div>
<div class="r" style="left:1193.90px;top:630.90px;width:8.80px;height:9.40px;background:#fff;border:0.7px solid #bbb;box-sizing:border-box;z-index:5;"></div>
<svg class="r" style="left:1196.50px;top:633.50px;z-index:5;" width="4" height="5" viewBox="0 0 4 5"><path d="M0.5 0.3v4L3 2.3z" fill="#444"/></svg>
<div class="r" style="left:0.00px;top:643.60px;width:1214.00px;height:14.40px;background:#f3f3f3;border-top:0.8px solid #d9d9d9;box-sizing:border-box;z-index:5;"></div>
<div class="r" style="left:1032.80px;top:644.50px;width:23.40px;height:13.50px;background:#d2d2d2;;z-index:5;"></div>
<svg class="r" style="left:1040.00px;top:647.00px;z-index:5;" width="9" height="9" viewBox="0 0 9 9"><rect x="0.5" y="0.5" width="8" height="8" fill="none" stroke="#666" stroke-width="0.7"/><path d="M3.2 0.5v8M5.8 0.5v8M0.5 3.2h8M0.5 5.8h8" stroke="#666" stroke-width="0.6"/></svg>
<svg class="r" style="left:1064.00px;top:647.00px;z-index:5;" width="9" height="9" viewBox="0 0 9 9"><rect x="0.5" y="0.5" width="8" height="8" fill="none" stroke="#777" stroke-width="0.7"/><rect x="2.5" y="1.5" width="4" height="6" fill="none" stroke="#777" stroke-width="0.6"/></svg>
<svg class="r" style="left:1088.00px;top:647.00px;z-index:5;" width="9" height="9" viewBox="0 0 9 9"><path d="M0.5 0.5v8h8v-8" fill="none" stroke="#777" stroke-width="0.7"/><path d="M3.5 0.5v3.5h3V0.5" fill="none" stroke="#777" stroke-width="0.6"/></svg>
<div class="r" style="left:1107.80px;top:650.80px;width:3.50px;height:1.00px;background:#555;;z-index:5;"></div>
<div class="r" style="left:1114.80px;top:651.00px;width:62.80px;height:0.60px;background:#aaa;;z-index:5;"></div>
<div class="r" style="left:1144.70px;top:647.50px;width:2.40px;height:7.00px;background:#666;;z-index:5;"></div>
<svg class="r" style="left:1179.00px;top:648.50px;z-index:5;" width="5" height="5" viewBox="0 0 5 5"><path d="M2.5 0v5M0 2.5h5" stroke="#555" stroke-width="0.9"/></svg>
<div class="t" id="t0" style="left:554.90px;top:6.45px;font-size:8.5px;color:#fff;transform:scaleX(0.8634);">Willkommen bei Excel1&nbsp; - &nbsp;Excel</div>
<div class="t" id="t1" style="left:1051.00px;top:6.57px;font-size:7.3px;color:#217346;transform:scaleX(1.0408);">Anmelden</div>
<div class="t" id="t2" style="left:9.90px;top:27.59px;font-size:7.4px;color:#fff;transform:scaleX(1.0078);">Datei</div>
<div class="t" id="t3" style="left:45.50px;top:27.59px;font-size:7.4px;color:#217346;transform:scaleX(1.0314);">Start</div>
<div class="t" id="t4" style="left:78.40px;top:27.59px;font-size:7.4px;color:#fff;transform:scaleX(1.0141);">Einfügen</div>
<div class="t" id="t5" style="left:125.20px;top:27.59px;font-size:7.4px;color:#fff;transform:scaleX(1.0126);">Seitenlayout</div>
<div class="t" id="t6" style="left:183.50px;top:27.59px;font-size:7.4px;color:#fff;transform:scaleX(1.0107);">Formeln</div>
<div class="t" id="t7" style="left:227.30px;top:27.59px;font-size:7.4px;color:#fff;transform:scaleX(1.0033);">Daten</div>
<div class="t" id="t8" style="left:264.60px;top:27.59px;font-size:7.4px;color:#fff;transform:scaleX(1.0248);">Überprüfen</div>
<div class="t" id="t9" style="left:319.60px;top:27.59px;font-size:7.4px;color:#fff;transform:scaleX(1.0598);">Ansicht</div>
<div class="t" id="t10" style="left:361.80px;top:27.59px;font-size:7.4px;color:#fff;transform:scaleX(1.1151);">Hilfe</div>
<div class="t" id="t11" style="left:406.60px;top:27.15px;font-size:8.5px;color:#fff;transform:scaleX(0.8615);">Was möchten Sie tun?</div>
<div class="t" id="t12" style="left:1167.00px;top:27.15px;font-size:8.5px;color:#fff;transform:scaleX(0.8568);">Freigeben</div>
<div class="t" id="t13" style="left:29.30px;top:90.18px;font-size:8.0px;color:#444;transform:scaleX(0.8424);">Zwischenablage</div>
<div class="t" id="t14" style="left:165.00px;top:90.18px;font-size:8.0px;color:#444;transform:scaleX(0.8683);">Schriftart</div>
<div class="t" id="t15" style="left:324.80px;top:90.18px;font-size:8.0px;color:#444;transform:scaleX(0.8663);">Ausrichtung</div>
<div class="t" id="t16" style="left:479.00px;top:90.18px;font-size:8.0px;color:#444;transform:scaleX(0.8225);">Zahl</div>
<div class="t" id="t17" style="left:704.90px;top:90.18px;font-size:8.0px;color:#444;transform:scaleX(0.8549);">Formatvorlagen</div>
<div class="t" id="t18" style="left:961.00px;top:90.18px;font-size:8.0px;color:#444;transform:scaleX(0.8809);">Zellen</div>
<div class="t" id="t19" style="left:1084.50px;top:90.18px;font-size:8.0px;color:#444;transform:scaleX(0.8811);">Bearbeiten</div>
<div class="t" id="t20" style="left:3.60px;top:68.28px;font-size:8.0px;color:#444;transform:scaleX(0.9369);">Einfügen</div>
<div class="t" id="t21" style="left:49.40px;top:46.48px;font-size:8.0px;color:#444;transform:scaleX(0.9330);">Ausschneiden</div>
<div class="t" id="t22" style="left:49.40px;top:60.98px;font-size:8.0px;color:#444;transform:scaleX(0.9241);">Kopieren</div>
<div class="t" id="t23" style="left:49.40px;top:75.58px;font-size:8.0px;color:#444;transform:scaleX(0.9296);">Format übertragen</div>
<div class="t" id="t24" style="left:123.60px;top:51.48px;font-size:8.0px;color:#444;transform:scaleX(0.9571);">Calibri</div>
<div class="t" id="t25" style="left:194.30px;top:51.48px;font-size:8.0px;color:#444;transform:scaleX(0.7699);">11</div>
<div class="t" id="t26" style="left:347.50px;top:51.48px;font-size:8.0px;color:#444;transform:scaleX(0.9498);">Textumbruch</div>
<div class="t" id="t27" style="left:347.50px;top:70.68px;font-size:8.0px;color:#444;transform:scaleX(0.9339);">Verbinden und zentrieren</div>
<div class="t" id="t28" style="left:451.50px;top:51.48px;font-size:8.0px;color:#444;transform:scaleX(0.9055);">Standard</div>
<div class="t" id="t29" style="left:549.70px;top:68.28px;font-size:8.0px;color:#444;transform:scaleX(0.9401);">Bedingte</div>
<div class="t" id="t30" style="left:539.40px;top:78.18px;font-size:8.0px;color:#444;transform:scaleX(0.9479);">Formatierung</div>
<div class="t" id="t31" style="left:597.00px;top:68.28px;font-size:8.0px;color:#444;transform:scaleX(0.9028);">Als Tabelle</div>
<div class="t" id="t32" style="left:592.60px;top:78.18px;font-size:8.0px;color:#444;transform:scaleX(0.9612);">formatieren</div>
<div class="t" id="t33" style="left:643.60px;top:50.63px;font-size:9.0px;color:#222;-webkit-text-stroke:0.15px #222;transform:scaleX(1.0099);">Rahmenlinie...</div>
<div class="t" id="t34" style="left:777.80px;top:50.83px;font-size:9.0px;color:#222;-webkit-text-stroke:0.15px #222;transform:scaleX(0.9606);">Unterer Rand</div>
<div class="t" id="t35" style="left:643.60px;top:67.83px;font-size:9.0px;color:#222;-webkit-text-stroke:0.15px #222;transform:scaleX(0.9471);">Standard</div>
<div class="t" id="t36" style="left:710.80px;top:67.83px;font-size:9.0px;color:#006100;-webkit-text-stroke:0.15px #006100;transform:scaleX(0.9507);">Gut</div>
<div class="t" id="t37" style="left:777.80px;top:67.83px;font-size:9.0px;color:#9c6500;-webkit-text-stroke:0.15px #9c6500;transform:scaleX(1.0132);">Neutral</div>
<div class="t" id="t38" style="left:845.00px;top:67.83px;font-size:9.0px;color:#9c0006;-webkit-text-stroke:0.15px #9c0006;transform:scaleX(0.9499);">Schlecht</div>
<div class="t" id="t39" style="left:926.40px;top:67.48px;font-size:8.0px;color:#444;transform:scaleX(0.9527);">Einfügen</div>
<div class="t" id="t40" style="left:959.70px;top:67.48px;font-size:8.0px;color:#444;transform:scaleX(0.9157);">Löschen</div>
<div class="t" id="t41" style="left:990.60px;top:67.48px;font-size:8.0px;color:#444;transform:scaleX(0.9233);">Format</div>
<div class="t" id="t42" style="left:1035.60px;top:46.98px;font-size:8.0px;color:#444;transform:scaleX(0.9312);">AutoSumme</div>
<div class="t" id="t43" style="left:1035.60px;top:61.48px;font-size:8.0px;color:#444;transform:scaleX(0.9598);">Ausfüllen</div>
<div class="t" id="t44" style="left:1035.60px;top:75.98px;font-size:8.0px;color:#444;transform:scaleX(0.9058);">Löschen</div>
<div class="t" id="t45" style="left:1090.70px;top:67.48px;font-size:8.0px;color:#444;transform:scaleX(0.9223);">Sortieren und</div>
<div class="t" id="t46" style="left:1100.50px;top:77.28px;font-size:8.0px;color:#444;transform:scaleX(0.9130);">Filtern</div>
<div class="t" id="t47" style="left:1140.00px;top:67.48px;font-size:8.0px;color:#444;transform:scaleX(0.9273);">Suchen und</div>
<div class="t" id="t48" style="left:1138.90px;top:77.48px;font-size:8.0px;color:#444;transform:scaleX(0.9606);">Auswählen</div>
<div class="t" id="t49" style="left:7.40px;top:110.37px;font-size:8.6px;color:#444;-webkit-text-stroke:0.15px #444;transform:scaleX(0.9890);">A1</div>
<div class="t" id="t50" style="left:165.50px;top:110.73px;font-size:7.7px;color:#333;transform:scaleX(1.1341);">Zusammenfassen von Daten mit PivotTables</div>
<div class="t" id="t51" style="left:53.90px;top:170.40px;font-size:21.2px;color:#333;transform:scaleX(0.8911);-webkit-text-stroke:0.6px #f4f4f4;;">Zusammenfassen von Daten mit</div>
<div class="t" id="t52" style="left:53.90px;top:196.40px;font-size:21.2px;color:#333;transform:scaleX(0.8758);-webkit-text-stroke:0.6px #f4f4f4;;">PivotTables</div>
<div class="t" id="t53" style="left:86.80px;top:239.92px;font-size:9.6px;color:#404040;transform:scaleX(0.9556);">Sehen Sie sich die Spalten "Datum", "Verkäufer", "Produkt" und "Betrag"</div>
<div class="t" id="t54" style="left:86.80px;top:252.42px;font-size:9.6px;color:#404040;transform:scaleX(0.9542);">an. Können Sie schnell das profitabelste Produkt identifizieren? Oder</div>
<div class="t" id="t55" style="left:86.80px;top:264.82px;font-size:9.6px;color:#404040;transform:scaleX(0.9470);">angeben, welcher Verkäufer die größten Erfolge hat? Bei diesen Fragen</div>
<div class="t" id="t56" style="left:86.80px;top:277.12px;font-size:9.6px;color:#404040;transform:scaleX(0.9656);">kann die PivotTable unten weiterhelfen.</div>
<div class="t" id="t57" style="left:86.80px;top:295.62px;font-size:9.6px;color:#404040;transform:scaleX(0.9501);">Beim Erstellen der PivotTable haben wir auf ein paar Schaltflächen geklickt,</div>
<div class="t" id="t58" style="left:86.80px;top:308.02px;font-size:9.6px;color:#404040;transform:scaleX(0.9411);">sodass sich die Daten aufsummieren ließen. Daher wissen wir jetzt, welches</div>
<div class="t" id="t59" style="left:86.80px;top:320.32px;font-size:9.6px;color:#404040;transform:scaleX(0.9631);">Produkt das profitabelste ist.</div>
<div class="t" id="t60" style="left:86.80px;top:340.12px;font-size:9.6px;color:#404040;transform:scaleX(0.9532);">Jetzt werden Sie die Daten pivotieren, damit Sie feststellen können,</div>
<div class="t" id="t61" style="left:86.80px;top:352.22px;font-size:9.6px;color:#404040;transform:scaleX(0.9568);">welcher Verkäufer der erfolgreichste ist.&nbsp; Klicken Sie mit der rechten</div>
<div class="t" id="t62" style="left:86.80px;top:364.42px;font-size:9.6px;color:#404040;transform:scaleX(0.9608);">Maustaste auf eine beliebige Zelle innerhalb der PivotTable, und klicken</div>
<div class="t" id="t63" style="left:86.80px;top:376.62px;font-size:9.6px;color:#404040;transform:scaleX(0.9347);">Sie dann auf <b>Feldliste anzeigen</b>.</div>
<div class="t" id="t64" style="left:86.80px;top:396.02px;font-size:9.6px;color:#404040;transform:scaleX(0.9567);">Der Bereich "PivotTable-Felder" wird eingeblendet. Klicken Sie unten im</div>
<div class="t" id="t65" style="left:86.80px;top:408.32px;font-size:9.6px;color:#404040;transform:scaleX(0.9535);">Bereich unter <b>Zeilen</b> auf <b>Produkt</b>, und klicken Sie dann auf <b>Feld</b></div>
<div class="t" id="t66" style="left:86.80px;top:420.52px;font-size:9.6px;color:#404040;transform:scaleX(0.9485);"><b>entfernen</b>.</div>
<div class="t" id="t67" style="left:86.80px;top:441.62px;font-size:9.6px;color:#404040;transform:scaleX(0.9516);">Klicken Sie oben im Bereich auf das Kontrollkästchen für <b>Verkäufer</b>. Jetzt</div>
<div class="t" id="t68" style="left:86.80px;top:453.92px;font-size:9.6px;color:#404040;transform:scaleX(0.9505);">können Sie sehen, wer der erfolgreichste Verkäufer ist.</div>
<div class="t" id="t69" style="left:60.30px;top:496.22px;font-size:10.2px;color:#1f7a4a;transform:scaleX(0.9843);">Tiefer einsteigen und mehr Details erfahren</div>
<div class="t" id="t70" style="left:309.20px;top:496.22px;font-size:10.2px;color:#1f7a4a;transform:scaleX(0.9797);">Nächster Schritt</div>
<div class="t" id="t71" style="left:57.00px;top:571.50px;font-size:21.2px;color:#333;transform:scaleX(0.8081);-webkit-text-stroke:0.6px #f4f4f4;;">Erstellen einer PivotTable</div>
<div class="t" id="t72" style="left:57.00px;top:609.32px;font-size:9.6px;color:#404040;transform:scaleX(0.9450);">Jetzt sollten Sie die PivotTable einmal selbst erstellen, damit Sie wissen, wie das geht,</div>
<div class="t" id="t73" style="left:57.00px;top:621.82px;font-size:9.6px;color:#404040;transform:scaleX(0.9268);">wenn Sie Daten zusammenfassen müssen.</div>
<div class="t" id="t74" style="left:441.50px;top:207.08px;font-size:9.0px;color:#fff;-webkit-text-stroke:0.15px #fff;transform:scaleX(0.9617);">Datum</div>
<div class="t" id="t75" style="left:496.30px;top:207.08px;font-size:9.0px;color:#fff;-webkit-text-stroke:0.15px #fff;transform:scaleX(1.0148);">Verkäufer</div>
<div class="t" id="t76" style="left:558.30px;top:207.08px;font-size:9.0px;color:#fff;-webkit-text-stroke:0.15px #fff;transform:scaleX(0.9925);">Produkt</div>
<div class="t" id="t77" style="left:616.20px;top:207.08px;font-size:9.0px;color:#fff;-webkit-text-stroke:0.15px #fff;transform:scaleX(0.9800);">Betrag</div>
<div class="t" id="t78" style="left:452.80px;top:219.93px;font-size:9.0px;color:#111;-webkit-text-stroke:0.15px #111;transform:scaleX(0.8857);">15.04.2019</div>
<div class="t" id="t79" style="left:496.70px;top:219.93px;font-size:9.0px;color:#111;-webkit-text-stroke:0.15px #111;transform:scaleX(0.9272);">Anna</div>
<div class="t" id="t80" style="left:558.30px;top:219.93px;font-size:9.0px;color:#111;-webkit-text-stroke:0.15px #111;transform:scaleX(0.9740);">Bier</div>
<div class="t" id="t81" style="left:662.57px;top:219.93px;font-size:9.0px;color:#111;-webkit-text-stroke:0.15px #111;transform:scaleX(0.9000);">1.400 €</div>
<div class="t" id="t82" style="left:452.80px;top:232.58px;font-size:9.0px;color:#111;-webkit-text-stroke:0.15px #111;transform:scaleX(0.8857);">20.04.2019</div>
<div class="t" id="t83" style="left:496.70px;top:232.58px;font-size:9.0px;color:#111;-webkit-text-stroke:0.15px #111;transform:scaleX(1.0137);">Maximilian</div>
<div class="t" id="t84" style="left:558.30px;top:232.58px;font-size:9.0px;color:#111;-webkit-text-stroke:0.15px #111;transform:scaleX(1.0175);">Wein</div>
<div class="t" id="t85" style="left:662.57px;top:232.58px;font-size:9.0px;color:#111;-webkit-text-stroke:0.15px #111;transform:scaleX(0.9000);">1.010 €</div>
<div class="t" id="t86" style="left:452.80px;top:245.23px;font-size:9.0px;color:#111;-webkit-text-stroke:0.15px #111;transform:scaleX(0.8857);">07.05.2019</div>
<div class="t" id="t87" style="left:496.70px;top:245.23px;font-size:9.0px;color:#111;-webkit-text-stroke:0.15px #111;transform:scaleX(0.9272);">Anna</div>
<div class="t" id="t88" style="left:558.30px;top:245.23px;font-size:9.0px;color:#111;-webkit-text-stroke:0.15px #111;transform:scaleX(0.9740);">Bier</div>
<div class="t" id="t89" style="left:669.32px;top:245.23px;font-size:9.0px;color:#111;-webkit-text-stroke:0.15px #111;transform:scaleX(0.9000);">750 €</div>
<div class="t" id="t90" style="left:452.80px;top:257.88px;font-size:9.0px;color:#111;-webkit-text-stroke:0.15px #111;transform:scaleX(0.8988);">11.05.2019</div>
<div class="t" id="t91" style="left:496.70px;top:257.88px;font-size:9.0px;color:#111;-webkit-text-stroke:0.15px #111;transform:scaleX(1.0137);">Maximilian</div>
<div class="t" id="t92" style="left:558.30px;top:257.88px;font-size:9.0px;color:#111;-webkit-text-stroke:0.15px #111;transform:scaleX(0.8939);">Soda</div>
<div class="t" id="t93" style="left:669.32px;top:257.88px;font-size:9.0px;color:#111;-webkit-text-stroke:0.15px #111;transform:scaleX(0.9000);">510 €</div>
<div class="t" id="t94" style="left:452.80px;top:270.53px;font-size:9.0px;color:#111;-webkit-text-stroke:0.15px #111;transform:scaleX(0.8857);">31.05.2019</div>
<div class="t" id="t95" style="left:496.70px;top:270.53px;font-size:9.0px;color:#111;-webkit-text-stroke:0.15px #111;transform:scaleX(0.9727);">Marie</div>
<div class="t" id="t96" style="left:558.30px;top:270.53px;font-size:9.0px;color:#111;-webkit-text-stroke:0.15px #111;transform:scaleX(0.8939);">Soda</div>
<div class="t" id="t97" style="left:662.57px;top:270.53px;font-size:9.0px;color:#111;-webkit-text-stroke:0.15px #111;transform:scaleX(0.9000);">1.600 €</div>
<div class="t" id="t98" style="left:452.80px;top:283.18px;font-size:9.0px;color:#111;-webkit-text-stroke:0.15px #111;transform:scaleX(0.8988);">11.06.2019</div>
<div class="t" id="t99" style="left:496.70px;top:283.18px;font-size:9.0px;color:#111;-webkit-text-stroke:0.15px #111;transform:scaleX(0.9046);">Louisa</div>
<div class="t" id="t100" style="left:558.30px;top:283.18px;font-size:9.0px;color:#111;-webkit-text-stroke:0.15px #111;transform:scaleX(1.0175);">Wein</div>
<div class="t" id="t101" style="left:669.32px;top:283.18px;font-size:9.0px;color:#111;-webkit-text-stroke:0.15px #111;transform:scaleX(0.9000);">680 €</div>
<div class="t" id="t102" style="left:558.50px;top:308.28px;font-size:9.0px;color:#fff;-webkit-text-stroke:0.15px #fff;transform:scaleX(0.9185);">Row Labels</div>
<div class="t" id="t103" style="left:616.50px;top:308.28px;font-size:9.0px;color:#fff;-webkit-text-stroke:0.15px #fff;transform:scaleX(0.9566);">Summe von Betrag</div>
<div class="t" id="t104" style="left:558.50px;top:321.13px;font-size:9.0px;color:#111;-webkit-text-stroke:0.15px #111;transform:scaleX(0.9553);">Bier</div>
<div class="t" id="t105" style="left:666.10px;top:321.13px;font-size:9.0px;color:#111;-webkit-text-stroke:0.15px #111;transform:scaleX(0.8724);">2.150 €</div>
<div class="t" id="t106" style="left:558.50px;top:333.78px;font-size:9.0px;color:#111;-webkit-text-stroke:0.15px #111;transform:scaleX(0.8796);">Soda</div>
<div class="t" id="t107" style="left:666.10px;top:333.78px;font-size:9.0px;color:#111;-webkit-text-stroke:0.15px #111;transform:scaleX(0.8919);">2.110 €</div>
<div class="t" id="t108" style="left:558.50px;top:346.43px;font-size:9.0px;color:#111;-webkit-text-stroke:0.15px #111;transform:scaleX(1.0077);">Wein</div>
<div class="t" id="t109" style="left:666.10px;top:346.43px;font-size:9.0px;color:#111;-webkit-text-stroke:0.15px #111;transform:scaleX(0.8724);">1.690 €</div>
<div class="t" id="t110" style="left:558.50px;top:358.88px;font-size:9.0px;color:#fff;-webkit-text-stroke:0.15px #fff;transform:scaleX(0.9639);">Grand Total</div>
<div class="t" id="t111" style="left:666.10px;top:358.88px;font-size:9.0px;color:#fff;-webkit-text-stroke:0.15px #fff;transform:scaleX(0.8724);">5.950 €</div>
<div class="t" id="t112" style="left:484.90px;top:326.58px;font-size:8.0px;color:#404040;transform:scaleX(1.0617);">PivotTable</div>
<div class="t" id="t113" style="left:441.50px;top:599.23px;font-size:9.0px;color:#fff;-webkit-text-stroke:0.15px #fff;transform:scaleX(0.9617);">Datum</div>
<div class="t" id="t114" style="left:496.30px;top:599.23px;font-size:9.0px;color:#fff;-webkit-text-stroke:0.15px #fff;transform:scaleX(1.0148);">Verkäufer</div>
<div class="t" id="t115" style="left:558.30px;top:599.23px;font-size:9.0px;color:#fff;-webkit-text-stroke:0.15px #fff;transform:scaleX(0.9925);">Produkt</div>
<div class="t" id="t116" style="left:616.20px;top:599.23px;font-size:9.0px;color:#fff;-webkit-text-stroke:0.15px #fff;transform:scaleX(0.9800);">Betrag</div>
<div class="t" id="t117" style="left:452.80px;top:612.08px;font-size:9.0px;color:#111;-webkit-text-stroke:0.15px #111;transform:scaleX(0.8857);">15.04.2019</div>
<div class="t" id="t118" style="left:496.70px;top:612.08px;font-size:9.0px;color:#111;-webkit-text-stroke:0.15px #111;transform:scaleX(0.9272);">Anna</div>
<div class="t" id="t119" style="left:558.30px;top:612.08px;font-size:9.0px;color:#111;-webkit-text-stroke:0.15px #111;transform:scaleX(0.9740);">Bier</div>
<div class="t" id="t120" style="left:662.57px;top:612.08px;font-size:9.0px;color:#111;-webkit-text-stroke:0.15px #111;transform:scaleX(0.9000);">1.400 €</div>
<div class="t" id="t121" style="left:452.80px;top:624.73px;font-size:9.0px;color:#111;-webkit-text-stroke:0.15px #111;transform:scaleX(0.8857);">20.04.2019</div>
<div class="t" id="t122" style="left:496.70px;top:624.73px;font-size:9.0px;color:#111;-webkit-text-stroke:0.15px #111;transform:scaleX(1.0137);">Maximilian</div>
<div class="t" id="t123" style="left:558.30px;top:624.73px;font-size:9.0px;color:#111;-webkit-text-stroke:0.15px #111;transform:scaleX(1.0175);">Wein</div>
<div class="t" id="t124" style="left:662.57px;top:624.73px;font-size:9.0px;color:#111;-webkit-text-stroke:0.15px #111;transform:scaleX(0.9000);">1.010 €</div>
<div class="t" id="t125" style="left:71.70px;top:631.07px;font-size:8.6px;color:#3a3a3a;-webkit-text-stroke:0.15px #3a3a3a;transform:scaleX(0.9253);z-index:5;">Start</div>
<div class="t" id="t126" style="left:106.30px;top:631.07px;font-size:8.6px;color:#3a3a3a;-webkit-text-stroke:0.15px #3a3a3a;transform:scaleX(0.9659);z-index:5;">1. Addieren</div>
<div class="t" id="t127" style="left:166.80px;top:631.07px;font-size:8.6px;color:#3a3a3a;-webkit-text-stroke:0.15px #3a3a3a;transform:scaleX(0.9451);z-index:5;">2. Ausfüllen</div>
<div class="t" id="t128" style="left:227.80px;top:631.07px;font-size:8.6px;color:#3a3a3a;-webkit-text-stroke:0.15px #3a3a3a;transform:scaleX(0.9542);z-index:5;">3. Teilen</div>
<div class="t" id="t129" style="left:277.20px;top:631.07px;font-size:8.6px;color:#3a3a3a;-webkit-text-stroke:0.15px #3a3a3a;transform:scaleX(0.9628);z-index:5;">4. Transponieren</div>
<div class="t" id="t130" style="left:359.60px;top:631.07px;font-size:8.6px;color:#3a3a3a;-webkit-text-stroke:0.15px #3a3a3a;transform:scaleX(0.9551);z-index:5;">5. Sortieren und Filtern</div>
<div class="t" id="t131" style="left:463.30px;top:631.07px;font-size:8.6px;color:#3a3a3a;-webkit-text-stroke:0.15px #3a3a3a;transform:scaleX(0.9608);z-index:5;">6. Tabellen</div>
<div class="t" id="t132" style="left:522.90px;top:631.07px;font-size:8.6px;color:#3a3a3a;-webkit-text-stroke:0.15px #3a3a3a;transform:scaleX(0.9797);z-index:5;">7. Dropdownlisten</div>
<div class="t" id="t133" style="left:609.40px;top:631.07px;font-size:8.6px;color:#3a3a3a;-webkit-text-stroke:0.15px #3a3a3a;transform:scaleX(0.9466);z-index:5;">8. Analysieren</div>
<div class="t" id="t134" style="left:679.30px;top:631.07px;font-size:8.6px;color:#3a3a3a;-webkit-text-stroke:0.15px #3a3a3a;transform:scaleX(0.9524);z-index:5;">9. Diagramme</div>
<div class="t" id="t135" style="left:826.20px;top:631.07px;font-size:8.6px;color:#3a3a3a;-webkit-text-stroke:0.15px #3a3a3a;transform:scaleX(0.9729);z-index:5;">Weitere Informationen</div>
<div class="t" id="t136" style="left:748.50px;top:631.72px;font-size:7.6px;color:#217346;font-weight:bold;transform:scaleX(1.0834);z-index:5;">10. PivotTables</div>
<div class="t" id="t137" style="left:4.40px;top:648.05px;font-size:7.8px;color:#444;transform:scaleX(0.8982);z-index:5;">Bereit</div>
<div class="t" id="t138" style="left:1191.20px;top:648.05px;font-size:7.8px;color:#444;transform:scaleX(0.8503);z-index:5;">100 %</div>
</body></html>
